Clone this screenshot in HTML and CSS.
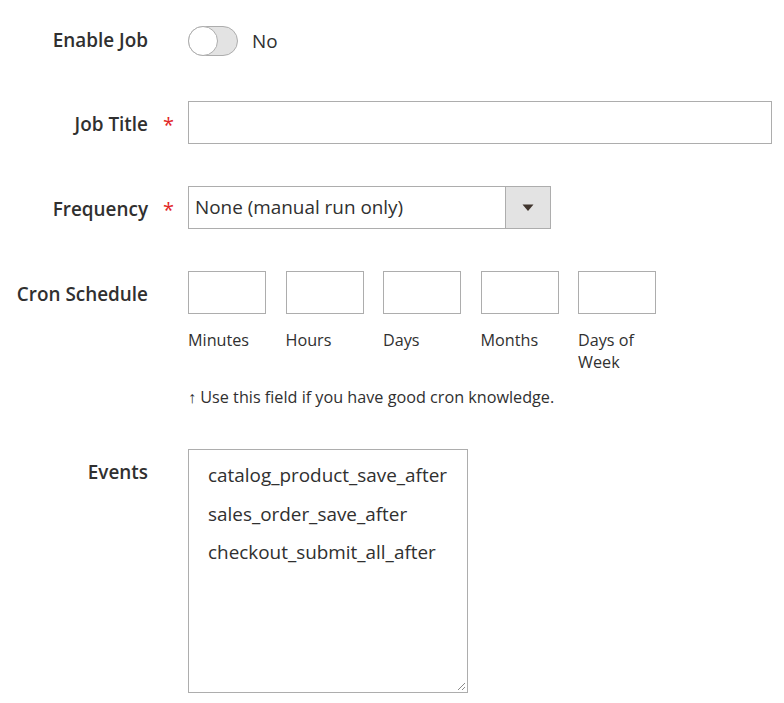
FILE: index.html
```html
<!DOCTYPE html>
<html>
<head>
<meta charset="utf-8">
<link rel="stylesheet" href="styles.css">
</head>
<body>
<form class="form">
  <div class="row row-enable">
    <div class="label label-plain"><span class="label-text">Enable Job</span><span class="mark"></span></div>
    <div class="control toggle-control">
      <span class="toggle"><span class="knob"></span></span>
      <span class="toggle-text">No</span>
    </div>
  </div>

  <div class="row row-title">
    <div class="label"><span class="label-text">Job Title</span><span class="mark">*</span></div>
    <div class="control"><div class="input wide"></div></div>
  </div>

  <div class="row row-freq">
    <div class="label"><span class="label-text">Frequency</span><span class="mark">*</span></div>
    <div class="control">
      <div class="select">
        <span class="select-value">None (manual run only)</span>
        <span class="select-btn">
          <svg width="12" height="8" viewBox="0 0 12 8"><path d="M0.5 0.5 L11.5 0.5 L6 7 Z" fill="#41362f"/></svg>
        </span>
      </div>
    </div>
  </div>

  <div class="row row-cron">
    <div class="label"><span class="label-text">Cron Schedule</span><span class="mark"></span></div>
    <div class="control">
      <div class="cron-grid">
        <div class="cron-cell"><div class="input cron"></div><div class="cron-label">Minutes</div></div>
        <div class="cron-cell"><div class="input cron"></div><div class="cron-label">Hours</div></div>
        <div class="cron-cell"><div class="input cron"></div><div class="cron-label">Days</div></div>
        <div class="cron-cell"><div class="input cron"></div><div class="cron-label">Months</div></div>
        <div class="cron-cell"><div class="input cron"></div><div class="cron-label">Days of Week</div></div>
      </div>
      <div class="hint">↑ Use this field if you have good cron knowledge.</div>
    </div>
  </div>

  <div class="row row-events">
    <div class="label"><span class="label-text">Events</span><span class="mark"></span></div>
    <div class="control">
      <div class="multiselect">
        <div class="option">catalog_product_save_after</div>
        <div class="option">sales_order_save_after</div>
        <div class="option">checkout_submit_all_after</div>
        <svg class="grip" width="10" height="10" viewBox="0 0 10 10"><path d="M9 2 L2 9 M9 6 L6 9" stroke="#8a8a8a" stroke-width="1"/></svg>
      </div>
    </div>
  </div>
</form>
</body>
</html>
```
FILE: styles.css
```css
* { box-sizing: border-box; }
html, body { margin: 0; padding: 0; background: #ffffff; }
body {
  font-family: "Open Sans", "Noto Sans", "Liberation Sans", sans-serif;
  color: #303030;
  font-size: 19px;
}
.form {
  padding-top: 19px;
  display: flex;
  flex-direction: column;
}
.row {
  display: flex;
  align-items: flex-start;
}
.row-enable { margin-bottom: 39px; }
.row-title { margin-bottom: 42px; }
.row-freq { margin-bottom: 42px; }
.row-cron { margin-bottom: 41px; }

.label {
  width: 188px;
  flex: 0 0 188px;
  display: flex;
  line-height: 43px;
  height: 43px;
  padding-top: 2px;
}
.label.label-plain { padding-top: 0; }
.label-text {
  width: 148px;
  text-align: right;
  font-weight: 600;
  font-size: 18.9px;
  color: #303030;
}
.mark {
  width: 40px;
  text-align: center;
  color: #e22626;
  font-size: 20px;
  padding-left: 1px;
}
.control { flex: 0 0 auto; }

.toggle-control {
  display: flex;
  align-items: center;
  height: 43px;
}
.toggle {
  width: 50px;
  height: 30px;
  border-radius: 15px;
  background: #e3e3e3;
  border: 1px solid #adadad;
  position: relative;
  display: block;
}
.knob {
  position: absolute;
  left: -1px;
  top: -1px;
  width: 30px;
  height: 30px;
  border-radius: 50%;
  background: #ffffff;
  border: 1px solid #adadad;
}
.toggle-text {
  margin-left: 14px;
  font-size: 18.9px;
  color: #303030;
}

.input {
  border: 1px solid #adadad;
  background: #fff;
  height: 43px;
}
.wide { width: 584px; }

.select {
  width: 363px;
  height: 43px;
  border: 1px solid #adadad;
  display: flex;
  align-items: stretch;
}
.select-value {
  flex: 1;
  padding-left: 6px;
  line-height: 41px;
  font-size: 18.9px;
  color: #303030;
}
.select-btn {
  width: 45px;
  background: #e3e3e3;
  border-left: 1px solid #adadad;
  display: flex;
  align-items: center;
  justify-content: center;
}

.cron-grid {
  display: grid;
  grid-template-columns: repeat(5, 78px);
  column-gap: 19.5px;
}
.input.cron { width: 78px; }
.cron-label {
  margin-top: 15px;
  font-size: 16.2px;
  line-height: 22px;
  color: #303030;
}
.hint {
  margin-top: 13px;
  font-size: 16.2px;
  line-height: 22px;
  color: #303030;
}

.multiselect {
  position: relative;
  width: 280px;
  height: 244px;
  border: 1px solid #adadad;
  padding: 6px 19px;
}
.option {
  font-size: 18.9px;
  line-height: 38.5px;
  color: #303030;
}
.grip {
  position: absolute;
  right: 1px;
  bottom: 1px;
}
```
